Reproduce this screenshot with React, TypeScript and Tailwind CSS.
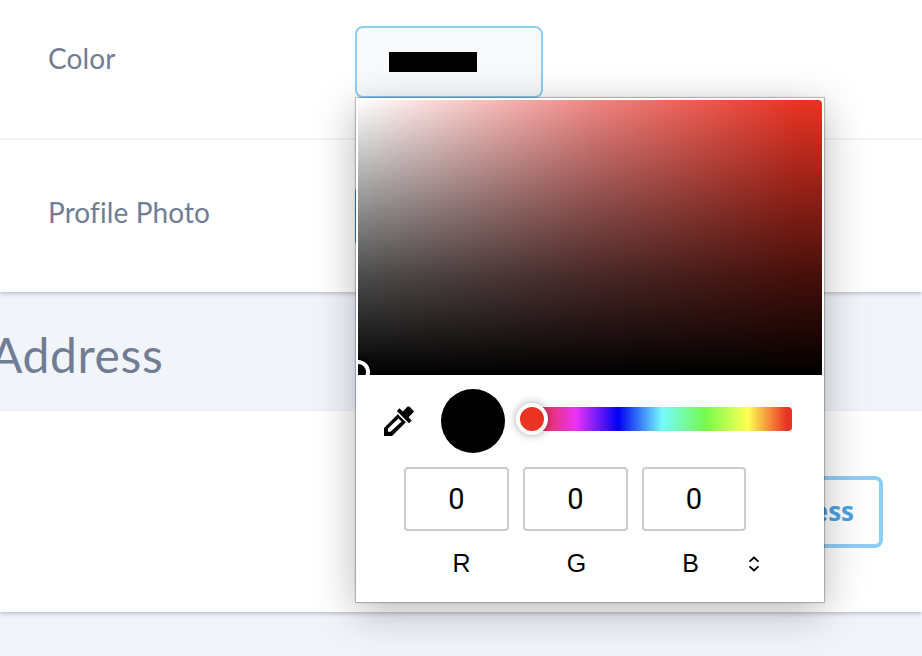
import React from "react";

const channels = [
  { name: "R", value: 0, box: "w-[105px]", label: "pl-[10px]" },
  { name: "G", value: 0, box: "w-[105px]", label: "pl-[2px]" },
  { name: "B", value: 0, box: "w-[104px]", label: "pr-[7px]" },
];

function FieldLabel({ children }: { children: React.ReactNode }) {
  return (
    <div className="w-[307px] shrink-0 text-[28px] leading-9 text-[#717d94]">
      {children}
    </div>
  );
}

function Eyedropper() {
  return (
    <svg width="30" height="30" viewBox="0 0 30 30" fill="none">
      <path d="M0 30V22L13.8 8.2L21.8 16.2L8 30H0ZM4 25.8H6.5L17.6 15.6L14.4 12.4L4 22.6V25.8Z" fill="#000" fillRule="evenodd" />
      <path d="M14.2 3.6L26.4 15.8" stroke="#000" strokeWidth="3.8" />
      <path d="M17.2 7.2L23.4 .8Q24.5-.3 25.6 .8L29.2 4.4Q30.3 5.5 29.2 6.6L22.8 13Z" fill="#000" />
    </svg>
  );
}

function ColorPicker() {
  return (
    <div className="absolute left-[356px] top-[98px] z-10 flex h-[504px] w-[468px] flex-col bg-white p-[2px] font-['Liberation_Sans',Arial,sans-serif] text-black shadow-[0_0_0_1px_rgba(0,0,0,0.16),0_0_2px_1px_rgba(0,0,0,0.12),0_10px_40px_rgba(0,0,0,0.28)]">
      <div className="relative h-[275px] shrink-0 overflow-hidden rounded-t-[4px] bg-[linear-gradient(to_top,#000,rgba(0,0,0,0.7)_36%,rgba(0,0,0,0.46)_59%,transparent),linear-gradient(to_right,#fff,#f08784_50%,#ea3323_95%)]">
        <div className="absolute -left-[12px] bottom-[-9px] h-6 w-6 rounded-full border-4 border-white bg-black shadow-[0_0_4px_2px_rgba(0,0,0,0.8)]" />
      </div>
      <div className="flex h-[92px] shrink-0 items-start pl-[26px]">
        <div className="mt-[31px] h-[30px] w-[30px]">
          <Eyedropper />
        </div>
        <div className="ml-[27px] mt-[14px] h-16 w-16 rounded-full bg-black" />
        <div className="relative ml-[19px] mt-[32px] h-6 w-[268px] rounded-[4px] bg-[linear-gradient(to_right,#ea3323_3%,#ea33f7_19.5%,#0000f5_35.2%,#75fbfd_51.5%,#75fb4c_67.7%,#ffff54_83.5%,#ea3323_98%)]">
          <div className="absolute -left-2 -top-1 h-8 w-8 rounded-full border-4 border-white bg-[#ea3323] shadow-[0_0_8px_rgba(0,0,0,0.35)]" />
        </div>
      </div>
      <div className="flex gap-[14px] pl-[46px]">
        {channels.map((channel) => (
          <div key={channel.name} className={`${channel.box} flex flex-col items-center`}>
            <div className="flex h-16 w-full items-center justify-center rounded-[4px] border-2 border-[#ccc] pb-px font-[Roboto,sans-serif] text-[29px] leading-8">
              {channel.value}
            </div>
            <div className={`${channel.label} mt-[17px] text-[25px] leading-[30px]`}>
              {channel.name}
            </div>
          </div>
        ))}
        <svg className="-ml-[12px] mt-[89px]" width="12" height="16" viewBox="0 0 12 16" fill="none" stroke="#000" strokeWidth="1.8">
          <path d="M1.5 5.7L6 1.5L10.5 5.7M1.5 10.3L6 14.5L10.5 10.3" />
        </svg>
      </div>
    </div>
  );
}

export default function App() {
  return (
    <div className="relative h-[656px] w-[922px] overflow-hidden bg-[#f1f5fa] font-[Lato,sans-serif]">
      <section className="h-[292px] bg-white shadow-[0_2px_4px_rgba(0,0,0,0.2)]">
        <div className="flex h-[140px] items-start border-b-2 border-[#f1f5f9] pl-12">
          <div className="pt-[40px]">
            <FieldLabel><span className="tracking-[0.1px]">Color</span></FieldLabel>
          </div>
          <div className="mt-[26px] h-[72px] w-[188px] rounded-lg border-2 border-[#90cdf4] bg-[#f8fafc] pl-8 pt-6">
            <div className="h-5 w-[88px] bg-black" />
          </div>
        </div>
        <div className="flex h-[152px] items-start pl-12">
          <div className="pt-[54px]">
            <FieldLabel><span className="tracking-[0.1px]">Profile Photo</span></FieldLabel>
          </div>
          <div className="mt-[44px] h-16 w-[180px] rounded-lg bg-[#4099de]" />
        </div>
      </section>
      <h2 className="-ml-[10px] flex h-[119px] items-center pt-[6px] text-[48px] leading-[60px] tracking-[0.6px] text-[#717d94]">
        Address
      </h2>
      <section className="flex h-[201px] items-start justify-end bg-white pr-[39px] pt-[65px] shadow-[0_2px_4px_rgba(0,0,0,0.2)]">
        <button className="h-[72px] w-[240px] rounded-lg border-4 border-[#90cdf4] pb-[2px] pr-[25px] text-right font-['Open_Sans',sans-serif] text-[26px] font-bold text-[#4ba3e2]">
          Address
        </button>
      </section>
      <ColorPicker />
    </div>
  );
}
